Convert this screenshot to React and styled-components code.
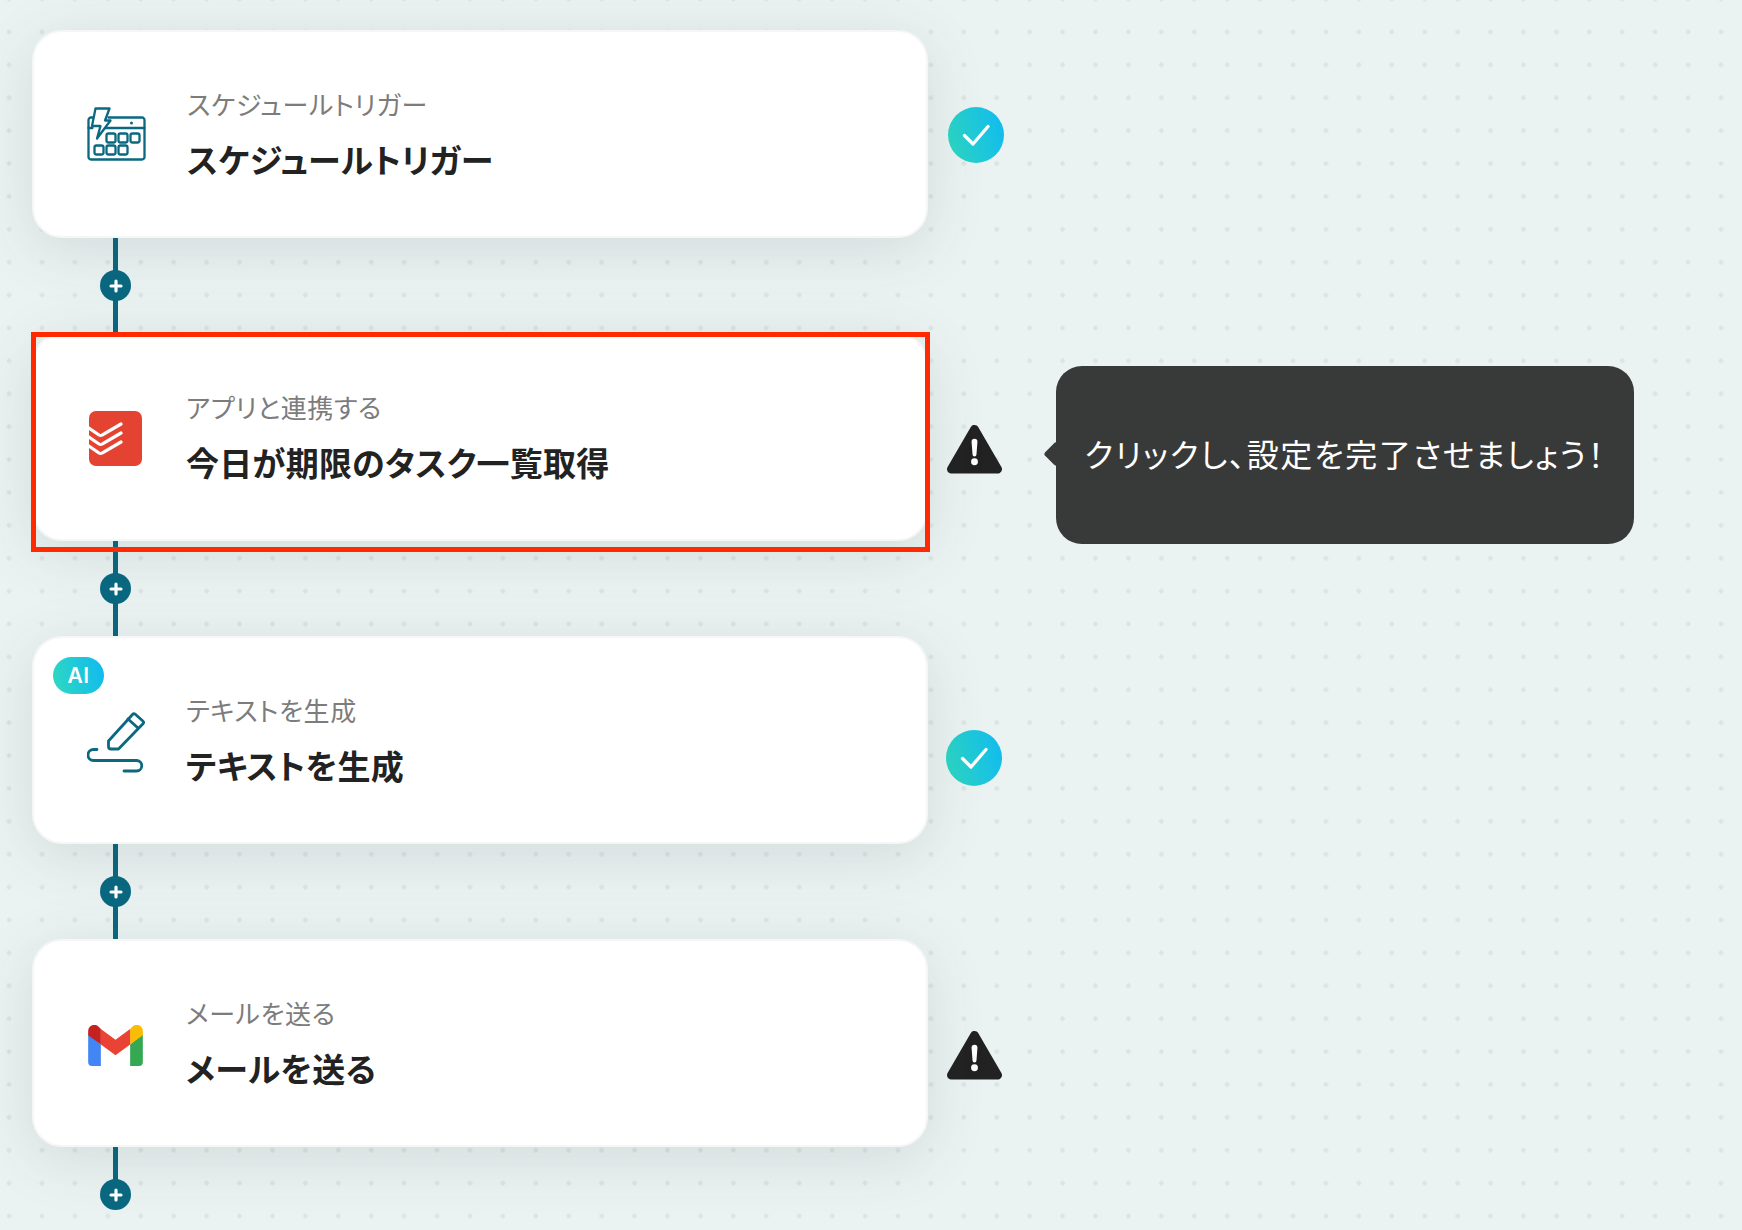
import React from "react";
import styled, { createGlobalStyle } from "styled-components";

const GlobalStyle = createGlobalStyle`
  html, body { margin: 0; padding: 0; }
  body {
    width: 1742px;
    height: 1230px;
    overflow: hidden;
    background: #ebf3f2;
    font-family: "Noto Sans CJK JP", "Noto Sans", sans-serif;
  }
`;

const Page = styled.div`
  display: flex;
  width: 1742px;
  height: 1230px;
  overflow: hidden;
  background-image: radial-gradient(circle, #dde4e4 2px, transparent 2.6px);
  background-size: 32.93px 32.9px;
  background-position: -7.4px -17.4px;
`;

const FlowColumn = styled.div`
  flex: 0 0 1040px;
  padding: 30px 0 0 32px;
  box-sizing: border-box;
`;

const HintColumn = styled.div`
  flex: 1;
  padding: 366px 0 0 16px;
`;

const Step = styled.div`
  display: flex;
  align-items: flex-start;
  gap: ${(p) => p.$gap}px;
`;

const Card = styled.div`
  position: relative;
  display: flex;
  align-items: center;
  flex: 0 0 896px;
  height: 208px;
  box-sizing: border-box;
  padding: 0 0 1px 52.5px;
  background: #fff;
  border: 2px solid #f5f6f6;
  border-radius: 30px;
  box-shadow: 0 12px 60px rgba(30, 70, 70, 0.13);
`;

const IconSlot = styled.div`
  flex: 0 0 58px;
  height: 60px;
  margin-right: 41.5px;
  padding-top: ${(p) => p.$shift}px;
  box-sizing: border-box;
  display: flex;
  align-items: center;
  justify-content: center;
`;

const Labels = styled.div`
  display: flex;
  flex-direction: column;
  gap: 14px;
  font-feature-settings: "palt";
`;

const Kicker = styled.div`
  font-size: 26px;
  line-height: 36px;
  color: #7c7c7c;
  letter-spacing: 0.6px;
`;

const Title = styled.div`
  font-size: 33px;
  line-height: 46px;
  font-weight: 700;
  color: #222;
  letter-spacing: 0.25px;
`;

const AiBadge = styled.div`
  position: absolute;
  left: 19px;
  top: 19px;
  width: 51px;
  height: 37px;
  border-radius: 19px;
  display: flex;
  align-items: center;
  justify-content: center;
  color: #fff;
  font-family: "Inter", sans-serif;
  font-weight: 600;
  font-size: 21px;
  letter-spacing: 0.5px;
  background: linear-gradient(75deg, #2fd9c0, #10b9f0);
`;

const RedFrame = styled.div`
  position: absolute;
  left: -3px;
  top: -3px;
  width: 899px;
  height: 220px;
  box-sizing: border-box;
  border: 5px solid #ff2a00;
  pointer-events: none;
`;

const Mark = styled.div`
  flex: 0 0 56px;
  height: 56px;
  margin-top: ${(p) => p.$top}px;
  display: flex;
  align-items: center;
  justify-content: center;
`;

const CheckMark = styled(Mark)`
  border-radius: 50%;
  background: linear-gradient(75deg, #2fd9c0, #10b9f0);
`;

const Connector = styled.div`
  display: flex;
  align-items: center;
  justify-content: center;
  width: 5px;
  height: 95px;
  margin-left: 81px;
  background: #0a6880;
`;

const LastConnector = styled(Connector)`
  height: 63px;
  align-items: flex-end;
  background: linear-gradient(#0a6880, #0a6880) top / 5px 40px no-repeat;
`;

const Plus = styled.div`
  flex: 0 0 31px;
  width: 31px;
  height: 31px;
  margin: 0 -13px;
  border-radius: 50%;
  background: #0a6880;
  display: flex;
  align-items: center;
  justify-content: center;
`;

const Tooltip = styled.div`
  position: relative;
  width: 578px;
  height: 178px;
  box-sizing: border-box;
  padding-bottom: 5px;
  border-radius: 26px;
  background: #383a39;
  color: #fff;
  font-size: 32px;
  font-feature-settings: "palt";
  letter-spacing: 1.7px;
  display: flex;
  align-items: center;
  justify-content: center;
  &::before {
    content: "";
    position: absolute;
    left: -9px;
    top: 79px;
    width: 18px;
    height: 18px;
    background: #383a39;
    border-radius: 3px;
    transform: rotate(45deg);
  }
`;

const CalendarIcon = () => (
  <svg width="59" height="54" viewBox="-0.5 -0.5 59 54" fill="none" stroke="#0a6880" strokeWidth="2.3" strokeLinejoin="round" strokeLinecap="round">
    <path d="M7 10H3.500a2.500 2.500 0 0 0-2.500 2.500v37a2.500 2.500 0 0 0 2.500 2.500h51a2.500 2.500 0 0 0 2.500-2.500v-37a2.500 2.500 0 0 0-2.500-2.500H21" />
    <path d="M1 20.500H5M15 20.500H57" />
    <path d="M8 1H22L17.500 13H23L9.500 31L13 18.500H4.500Z" fill="#fff" />
    <rect x="19" y="26" width="9" height="9" rx="2" />
    <rect x="31" y="26" width="9" height="9" rx="2" />
    <rect x="43" y="26" width="9" height="9" rx="2" />
    <rect x="7" y="38" width="9" height="9" rx="2" />
    <rect x="19" y="38" width="9" height="9" rx="2" />
    <rect x="31" y="38" width="9" height="9" rx="2" />
    <circle cx="44" cy="15.500" r="1.500" fill="#0a6880" stroke="none" />
  </svg>
);

const TodoistIcon = () => (
  <svg width="53" height="55" viewBox="0 0 53 55">
    <rect width="53" height="55" rx="7" fill="#e44332" />
    <path d="M-3 15L10 24Q11.500 25 13 24L32 13M-3 24L10 33Q11.500 34 13 33L32 22M-3 33L10 42Q11.500 43 13 42L32 31" fill="none" stroke="#fff" strokeWidth="3.200" strokeLinecap="round" />
  </svg>
);

const PenIcon = () => (
  <svg width="58" height="62" viewBox="0 0 58 62" fill="none" stroke="#0a6880" strokeWidth="2.800" strokeLinecap="round" strokeLinejoin="round">
    <path d="M21.500 29L45.500 2.500a2 2 0 0 1 2.800-.2L55.800 9a2 2 0 0 1 .2 2.800L31.500 37H24a2.500 2.500 0 0 1-2.500-2.500Z" />
    <path d="M41 7L51 16" />
    <path d="M10 37.500H6.500a5.500 5.500 0 0 0 0 11H49.500a5 5 0 0 1 0 10.500H37" />
  </svg>
);

const GmailIcon = () => (
  <svg width="55" height="41" viewBox="0 0 56 42">
    <path d="M0 9V38a4 4 0 0 0 4 4H13V20Z" fill="#4285f4" />
    <path d="M43 20V42H52a4 4 0 0 0 4-4V9Z" fill="#34a853" />
    <path d="M43 4V20L56 10.500V6C56 1 50-2 46 1Z" fill="#fbbc04" />
    <path d="M13 20V4L28 15L43 4V20L28 31Z" fill="#ea4335" />
    <path d="M0 6V10.500L13 20V4L10 1C6-2 0 1 0 6Z" fill="#c5221f" />
  </svg>
);

const CheckIcon = () => (
  <svg width="28" height="22" viewBox="0 0 28 22" fill="none" stroke="#fff" strokeWidth="3.300" strokeLinecap="round" strokeLinejoin="round">
    <path d="M2.500 11.500L11 20L26 2.500" />
  </svg>
);

const WarningIcon = () => (
  <svg width="55" height="51" viewBox="0 0 56 51">
    <path d="M28 5L51.500 45.500H4.500Z" fill="#222" stroke="#222" strokeWidth="9" strokeLinejoin="round" />
    <path d="M25 17.500a3 3 0 0 1 6 0L30 30.500a2 2 0 0 1-4 0Z" fill="#fff" />
    <circle cx="28" cy="38" r="3.500" fill="#fff" />
  </svg>
);

const PlusGlyph = () => (
  <svg width="14" height="14" viewBox="0 0 14 14" stroke="#fff" strokeWidth="3.200" strokeLinecap="round">
    <path d="M7 2V12M2 7H12" />
  </svg>
);

const steps = [
  { kicker: "スケジュールトリガー", title: "スケジュールトリガー", icon: <CalendarIcon />, shift: 0, mark: "check", gap: 20, top: 77 },
  { kicker: "アプリと連携する", title: "今日が期限のタスク一覧取得", icon: <TodoistIcon />, shift: 4, mark: "warn", gap: 18, top: 88, framed: true },
  { kicker: "テキストを生成", title: "テキストを生成", icon: <PenIcon />, shift: 6, mark: "check", gap: 18, top: 94, ai: true },
  { kicker: "メールを送る", title: "メールを送る", icon: <GmailIcon />, shift: 6, mark: "warn", gap: 18, top: 88 },
];

export default function App() {
  return (
    <Page>
      <GlobalStyle />
      <FlowColumn>
        {steps.map((s, i) => (
          <React.Fragment key={i}>
            <Step $gap={s.gap}>
              <Card>
                {s.ai && <AiBadge>AI</AiBadge>}
                <IconSlot $shift={s.shift}>{s.icon}</IconSlot>
                <Labels>
                  <Kicker>{s.kicker}</Kicker>
                  <Title>{s.title}</Title>
                </Labels>
                {s.framed && <RedFrame />}
              </Card>
              {s.mark === "check" ? (
                <CheckMark $top={s.top}>
                  <CheckIcon />
                </CheckMark>
              ) : (
                <Mark $top={s.top}>
                  <WarningIcon />
                </Mark>
              )}
            </Step>
            {i < steps.length - 1 ? (
              <Connector>
                <Plus>
                  <PlusGlyph />
                </Plus>
              </Connector>
            ) : (
              <LastConnector>
                <Plus>
                  <PlusGlyph />
                </Plus>
              </LastConnector>
            )}
          </React.Fragment>
        ))}
      </FlowColumn>
      <HintColumn>
        <Tooltip>クリックし、設定を完了させましょう！</Tooltip>
      </HintColumn>
    </Page>
  );
}
